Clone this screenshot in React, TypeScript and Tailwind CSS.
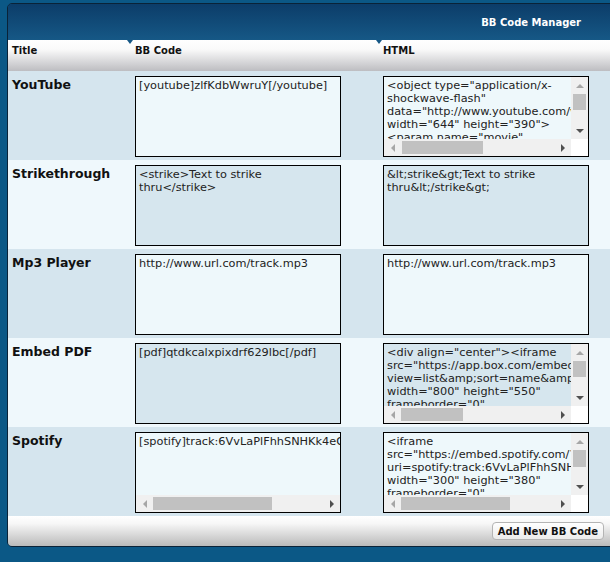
import clsx from 'clsx'

type VThumb = { top: number; size: number }
type HThumb = { left: number; size: number }

interface BoxProps {
  lines: string[]
  tinted?: boolean
  v?: VThumb
  h?: HThumb
}

interface Row {
  title: string
  bb: string[]
  html: string[]
  bbH?: HThumb
  htmlV?: VThumb
  htmlH?: HThumb
}

const rows: Row[] = [
  {
    title: 'YouTube',
    bb: ['[youtube]zlfKdbWwruY[/youtube]'],
    html: [
      '<object type="application/x-',
      'shockwave-flash"',
      'data="http://www.youtube.com/v/zlfKdbWwruY"',
      'width="644" height="390">',
      '<param name="movie"',
    ],
    htmlV: { top: 0, size: 16 },
    htmlH: { left: 1, size: 81 },
  },
  {
    title: 'Strikethrough',
    bb: ['<strike>Text to strike', 'thru</strike>'],
    html: ['&lt;strike&gt;Text to strike', 'thru&lt;/strike&gt;'],
  },
  {
    title: 'Mp3 Player',
    bb: ['http://www.url.com/track.mp3'],
    html: ['http://www.url.com/track.mp3'],
  },
  {
    title: 'Embed PDF',
    bb: ['[pdf]qtdkcalxpixdrf629lbc[/pdf]'],
    html: [
      '<div align="center"><iframe',
      'src="https://app.box.com/embed/preview/qtdkcalxpixdrf629lbc?',
      'view=list&amp;sort=name&amp;direction=ASC&amp;theme=blue"',
      'width="800" height="550"',
      'frameborder="0"',
    ],
    htmlV: { top: 0, size: 16 },
    htmlH: { left: 0, size: 62 },
  },
  {
    title: 'Spotify',
    bb: ['[spotify]track:6VvLaPlFhhSNHKk4eGSRDEt[/spotify]'],
    html: [
      '<iframe',
      'src="https://embed.spotify.com/?',
      'uri=spotify:track:6VvLaPlFhhSNHKk4eGSRDEt"',
      'width="300" height="380"',
      'frameborder="0"',
    ],
    bbH: { left: 0, size: 119 },
    htmlV: { top: 0, size: 17 },
    htmlH: { left: 0, size: 109 },
  },
]

function VBar({ top, size }: VThumb) {
  return (
    <div className="flex w-[17px] flex-col bg-[#f0f0f0]">
      <div className="flex h-[17px] items-center justify-center">
        <span className="h-0 w-0 border-x-[4px] border-b-[4px] border-x-transparent border-b-[#a6a6a6]" />
      </div>
      <div className="min-h-0 flex-1 px-[2px]">
        <div className="w-full bg-[#c1c1c1]" style={{ marginTop: top, height: size }} />
      </div>
      <div className="flex h-[17px] items-center justify-center">
        <span className="h-0 w-0 border-x-[4px] border-t-[4px] border-x-transparent border-t-[#505050]" />
      </div>
    </div>
  )
}

function HBar({ left, size }: HThumb) {
  return (
    <div className="flex h-[17px] min-w-0 flex-1 bg-[#f0f0f0]">
      <div className="flex w-[17px] items-center justify-center">
        <span className="h-0 w-0 border-y-[4px] border-r-[4px] border-y-transparent border-r-[#a6a6a6]" />
      </div>
      <div className="min-w-0 flex-1 py-[2px]">
        <div className="h-full bg-[#c1c1c1]" style={{ marginLeft: left, width: size }} />
      </div>
      <div className="flex w-[17px] items-center justify-center">
        <span className="h-0 w-0 border-y-[4px] border-l-[4px] border-y-transparent border-l-[#505050]" />
      </div>
    </div>
  )
}

function Box({ lines, tinted, v, h }: BoxProps) {
  return (
    <div
      className={clsx(
        'mt-[5px] flex h-[81px] w-[206px] flex-col overflow-hidden border border-black',
        tinted ? 'bg-[#d6e6ee]' : 'bg-[#eef8fb]',
      )}
    >
      <div className="flex min-h-0 flex-1">
        <div className="min-w-0 flex-1 overflow-hidden whitespace-pre px-[3px] pt-[2px] text-[11.3px] leading-[13px] text-[#222]">
          {lines.map((l, i) => (
            <div key={i}>{l}</div>
          ))}
        </div>
        {v && <VBar {...v} />}
      </div>
      {h && (
        <div className="flex h-[17px]">
          <HBar {...h} />
          {v && <div className="w-[17px] bg-white" />}
        </div>
      )}
    </div>
  )
}

function Notch() {
  return (
    <span className="absolute -left-[3px] top-0 h-0 w-0 border-x-[3px] border-t-[4px] border-x-transparent border-t-[#155785]" />
  )
}

export default function App() {
  return (
    <div className="h-[562px] w-[610px] overflow-hidden bg-[#0b5886] pl-[7px] pt-[3px] font-['DejaVu_Sans',Verdana,sans-serif]">
      <div className="w-[620px] overflow-hidden rounded-[5px] border border-[#0a2338]">
        {/* header band */}
        <div className="flex h-[36px] items-center justify-end bg-gradient-to-b from-[#0c3d69] to-[#165886] pr-[45px]">
          <span className="text-[10px] font-bold text-white">BB Code Manager</span>
        </div>

        {/* column titles */}
        <div className="grid h-[31px] grid-cols-[122px_249px_1fr] bg-[linear-gradient(to_bottom,#ffffff_0%,#fafafa_30%,#bdbdc1_100%)] text-[10px] font-bold leading-[12px] text-[#111]">
          <div className="pl-[4px] pt-[5px]">Title</div>
          <div className="relative pl-[5px] pt-[5px]">
            <Notch />
            BB Code
          </div>
          <div className="relative pl-[4px] pt-[5px]">
            <Notch />
            HTML
          </div>
        </div>

        {/* rows */}
        {rows.map((r, i) => {
          const dark = i % 2 === 0
          return (
            <div
              key={r.title}
              className={clsx(
                'grid h-[89px] grid-cols-[122px_249px_1fr]',
                dark ? 'bg-[#d5e5ee]' : 'bg-[#eff8fc]',
              )}
            >
              <div className="pl-[4px] pt-[6px] text-[12.5px] font-bold leading-[15px] text-[#111]">
                {r.title}
              </div>
              <div className="pl-[5px]">
                <Box lines={r.bb} tinted={!dark} h={r.bbH} />
              </div>
              <div className="pl-[4px]">
                <Box lines={r.html} tinted={!dark} v={r.htmlV} h={r.htmlH} />
              </div>
            </div>
          )
        })}

        {/* footer */}
        <div className="flex h-[30px] items-center justify-end bg-[linear-gradient(to_bottom,#ffffff_0%,#f7f7f7_25%,#bababa_100%)] pr-[22px]">
          <button className="flex h-[18px] items-center rounded-[4px] border border-[#b4b4b4] bg-gradient-to-b from-white to-[#ececec] px-[5px] text-[10px] font-bold text-[#111]">
            Add New BB Code
          </button>
        </div>
      </div>
    </div>
  )
}
